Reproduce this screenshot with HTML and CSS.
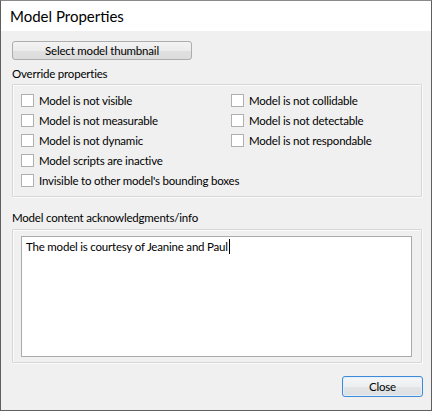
FILE: index.html
```html
<!DOCTYPE html>
<html>
<head>
<meta charset="utf-8">
<link rel="stylesheet" href="styles.css">
</head>
<body>
<div class="window">
  <div class="titlebar">Model Properties</div>
  <div class="content">
    <button class="btn thumb">Select model thumbnail</button>
    <div class="label first">Override properties</div>
    <div class="group props">
      <label class="check"><span class="box"></span>Model is not visible</label>
      <label class="check"><span class="box"></span>Model is not collidable</label>
      <label class="check"><span class="box"></span>Model is not measurable</label>
      <label class="check"><span class="box"></span>Model is not detectable</label>
      <label class="check"><span class="box"></span>Model is not dynamic</label>
      <label class="check"><span class="box"></span>Model is not respondable</label>
      <label class="check wide"><span class="box"></span>Model scripts are inactive</label>
      <label class="check wide"><span class="box"></span>Invisible to other model's bounding boxes</label>
    </div>
    <div class="label second">Model content acknowledgments/info</div>
    <div class="group info">
      <div class="textarea">The model is courtesy of Jeanine and Paul<span class="caret"></span></div>
    </div>
    <div class="footer">
      <button class="btn close">Close</button>
    </div>
  </div>
</div>
</body>
</html>
```
FILE: styles.css
```css
html, body {
  margin: 0;
  padding: 0;
  background: #f0f0f0;
}
body {
  font-family: Lato, "Noto Sans", sans-serif;
  font-size: 11.5px;
  letter-spacing: -0.2px;
  color: #000;
}
.window {
  width: 432px;
  height: 411px;
  box-sizing: border-box;
  border: 1px solid #5f5f5f;
  border-top-color: #8a8a8a;
  background: #f0f0f0;
  display: flex;
  flex-direction: column;
}
.titlebar {
  height: 30px;
  background: #fff;
  font-size: 15px;
  letter-spacing: 0;
  line-height: 30px;
  padding-left: 9px;
  color: #000;
}
.content {
  flex: 1;
  padding: 10px 9px 0 11px;
  display: flex;
  flex-direction: column;
}
.btn {
  font-family: inherit;
  font-size: 11.5px;
  letter-spacing: -0.2px;
  color: #000;
  padding: 0;
  margin: 0;
  box-sizing: border-box;
  border-radius: 3px;
  line-height: 16px;
}
.thumb {
  width: 180px;
  height: 19px;
  border: 1px solid #adadad;
  background: linear-gradient(#f3f3f3 0%, #ececec 50%, #e0e0e0 51%, #dcdcdc 100%);
}
.label {
  line-height: 16px;
  height: 16px;
}
.label.first {
  margin-top: 6px;
}
.label.second {
  margin-top: 13px;
}
.group {
  border: 1px solid #d7d7d7;
  box-shadow: inset 1px 1px 0 #fbfbfb, 1px 1px 0 #fbfbfb;
  border-radius: 1px;
}
.props {
  margin-top: 2px;
  height: 113px;
  box-sizing: border-box;
  padding: 5px 8px 0 8px;
  display: grid;
  grid-template-columns: 210px 1fr;
  grid-auto-rows: 20px;
}
.check {
  display: flex;
  align-items: center;
  gap: 5px;
  white-space: nowrap;
}
.check.wide {
  grid-column: 1 / span 2;
}
.box {
  width: 13px;
  height: 13px;
  box-sizing: border-box;
  border: 1px solid #b0b0b0;
  background: #fff;
  flex: none;
}
.info {
  margin-top: 3px;
  padding: 6px 9px 5px 8px;
  height: 134px;
  box-sizing: border-box;
}
.textarea {
  height: 121px;
  box-sizing: border-box;
  border: 1px solid #ababab;
  background: #fff;
  padding: 2px 4px;
  line-height: 16px;
}
.caret {
  display: inline-block;
  width: 1px;
  height: 15px;
  background: #000;
  vertical-align: -3px;
  margin-left: 1px;
}
.footer {
  display: flex;
  justify-content: flex-end;
  margin-top: 13px;
  margin-right: -1px;
}
.close {
  width: 81px;
  height: 21px;
  border: 1px solid #3c8ad8;
  background: linear-gradient(#f4f6f8 0%, #eceef0 50%, #e2e4e6 51%, #dde0e3 100%);
  box-shadow: inset 0 0 0 1px #e3effa;
}
```
